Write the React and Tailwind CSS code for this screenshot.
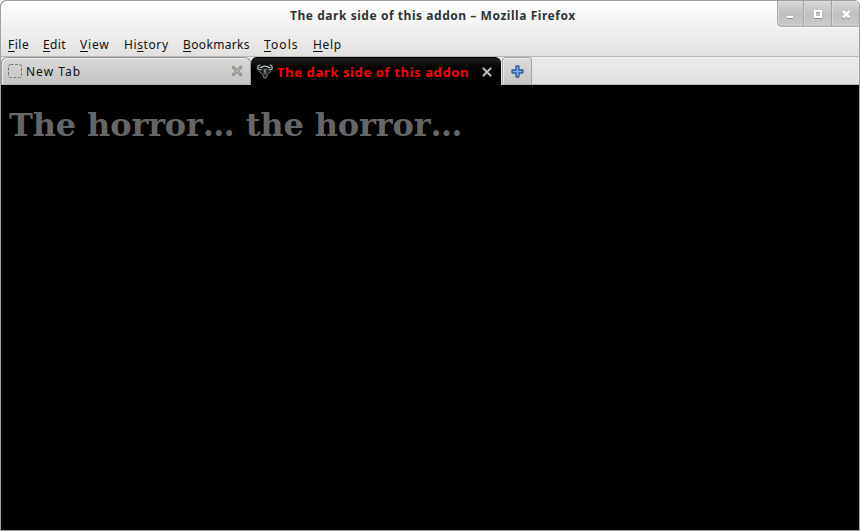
const menus = [
  { key: 'F', pre: '', post: 'ile', cls: 'w-[35px] tracking-[0.5px]' },
  { key: 'E', pre: '', post: 'dit', cls: 'w-[37px] tracking-[0.4px]' },
  { key: 'V', pre: '', post: 'iew', cls: 'w-[44px] tracking-[0.8px]' },
  { key: 's', pre: 'Hi', post: 'tory', cls: 'w-[59px] tracking-[0.6px]' },
  { key: 'B', pre: '', post: 'ookmarks', cls: 'w-[81px] tracking-[0.35px]' },
  { key: 'T', pre: '', post: 'ools', cls: 'w-[49px] tracking-[1.1px]' },
  { key: 'H', pre: '', post: 'elp', cls: 'w-[40px] tracking-[0.7px]' },
];

function WindowButtons() {
  return (
    <svg width="82" height="28" viewBox="0 0 82 28" className="shrink-0">
      <defs>
        <linearGradient id="wb" x1="0" y1="0" x2="0" y2="1">
          <stop offset="0" stopColor="#dadada" />
          <stop offset=".5" stopColor="#c0c0c0" />
          <stop offset="1" stopColor="#cbcbcb" />
        </linearGradient>
      </defs>
      <path d="M.5 0V23Q.5 27 4.500 27H82V0Z" fill="#fafafa" />
      <path d="M.5 0V22Q.5 25.500 4.500 25.500H82V0Z" fill="url(#wb)" />
      <path d="M.5 0V21.500Q.5 25.500 4.500 25.500H82" fill="none" stroke="#a9a9a9" />
      <path d="M26.500 0V25M54.500 0V25" stroke="#a6a6a6" />
      <path d="M27.500 0V25M55.500 0V25M1.500 0V22" stroke="#d8d8d8" />
      <path d="M10 17.500h6M37 17.500h8M65 17.500h2.500M70.500 17.500h2.500" stroke="#8f8f8f" />
      <path d="M10 16h6" stroke="#fff" strokeWidth="2" />
      <rect x="38" y="10" width="6" height="6" fill="none" stroke="#fff" strokeWidth="2" />
      <path d="M39 11.500h4" stroke="#999" />
      <path d="M66 10l6.500 6.500M72.500 10l-6.500 6.500" stroke="#fff" strokeWidth="2.200" />
    </svg>
  );
}

function TabClose({ dark }) {
  return (
    <svg width="12" height="12" viewBox="0 0 12 12" className="shrink-0">
      <path d="M1.500 1.500l9 9M10.500 1.500l-9 9" stroke={dark ? '#555' : '#858580'} strokeWidth={dark ? 2.600 : 3} />
      <path d="M2.300 2.300l7.400 7.400M9.700 2.300l-7.400 7.400" stroke={dark ? '#cfcfcb' : '#bdbdb9'} strokeWidth={dark ? 1.400 : 1.100} />
    </svg>
  );
}

function SkullIcon() {
  return (
    <svg width="16" height="16" viewBox="0 0 16 16" className="shrink-0">
      <path d="M4.500 5.500C1.500 6.200.2 5 1 2.700 1.500 1.300 2.500 1 3.500 1.200M11.500 5.500c3 .7 4.300-.5 3.500-2.800C14.500 1.300 13.500 1 12.500 1.200" fill="none" stroke="#a8adad" strokeWidth="1.400" />
      <path d="M2.500 3.500C4 4.500 5 2.200 8 2.200s4 2.300 5.500 1.300" fill="none" stroke="#c0c4c4" strokeWidth="1.300" />
      <path d="M3.500 6l1.500-2h6l1.500 2-.4 2.500-1.600 3-1 2.500L8 15.500 6.500 14l-1-2.500-1.600-3z" fill="#303434" />
      <path d="M4.500 7l2 .7-.3 1.500-1.500-.7zM11.500 7l-2 .7.3 1.500 1.500-.7zM7 11h2l-1 1.500z" fill="#080808" />
      <path d="M7 10l1-5 1 5M5.500 10.500l1.500 3 1 1 1-1 1.500-3M1.500 7.500l2 .5 1 2M14.500 7.500l-2 .5-1 2" stroke="#8f9494" strokeWidth=".8" fill="none" />
    </svg>
  );
}

export default function App() {
  return (
    <div className="flex h-[531px] w-[860px] bg-white">
      <div className="flex w-[860px] flex-col overflow-hidden rounded-t-[6px] border border-[#a0a0a0] bg-black font-['Noto_Sans',sans-serif] text-[13px] text-[#101010]">
        <header className="flex h-[55px] shrink-0 flex-col bg-gradient-to-b from-white to-[#e2e1e0]">
          <div className="flex h-7 justify-end">
            <div className="flex-1 pl-[289px] text-[12px] leading-[29px] font-bold tracking-[0.55px] whitespace-nowrap text-[#2e3436]">
              <span>The dark side of this addon – Mozilla Firefox</span>
            </div>
            <WindowButtons />
          </div>
          <nav className="flex h-[27px] pl-[7px] text-[12px] leading-[32px]">
            {menus.map((m) => (
              <span key={m.post} className={'whitespace-nowrap ' + m.cls}>
                {m.pre}
                <span className="underline decoration-1 underline-offset-[2px]">{m.key}</span>
                {m.post}
              </span>
            ))}
          </nav>
        </header>
        <div className="flex h-[29px] shrink-0 border-t border-[#b9b8b7] bg-gradient-to-b from-[#ecebea] to-[#e1e0df]">
          <div className="flex h-[28px] w-[250px] items-center rounded-t-[6px] border border-[#999] border-b-[#b5b4b3] bg-gradient-to-b from-[#dad9d8] to-[#c5c4c3] pr-[7px] pl-[5px] shadow-[inset_1px_1px_0_#ececeb]">
            <svg width="16" height="16" viewBox="0 0 16 16">
              <rect x="1.500" y="1.500" width="13" height="13" rx="2" fill="none" stroke="#777" strokeDasharray="3 1.500" />
            </svg>
            <span className="ml-[3px] flex-1 pt-[2px] text-[12px] leading-[24px] tracking-[1px]">New Tab</span>
            <TabClose />
          </div>
          <div className="flex h-7 w-[250px] items-center rounded-t-[6px] border-t border-black bg-gradient-to-b from-[#202020] to-black to-70% pr-2 pl-[6px]">
            <SkullIcon />
            <span className="ml-[4px] flex-1 pt-[1px] text-[13px] leading-[26px] font-bold tracking-[0.62px] whitespace-nowrap text-[#f00]">The dark side of this addon</span>
            <TabClose dark />
          </div>
          <div className="ml-[1px] flex h-[28px] w-[30px] items-center justify-center rounded-t-[4px] border border-[#a5a5a5] border-b-[#b5b4b3] bg-gradient-to-b from-[#dddcdb] to-[#c7c6c5] pl-px shadow-[inset_1px_1px_0_#ececeb]">
            <svg width="13" height="13" viewBox="0 0 13 13">
              <path d="M5 1.500Q5 1 5.500 1h2q.5 0 .5.500V5h3.500q.5 0 .5.500v2q0 .500-.5.500H8v3.500q0 .500-.5.500h-2q-.5 0-.5-.5V8H1.500Q1 8 1 7.500v-2Q1 5 1.500 5H5z" fill="#82aedd" stroke="#2c5a9c" strokeWidth="1.300" />
            </svg>
          </div>
          <div className="h-[28px] flex-1 border-b border-[#b5b4b3]" />
        </div>
        <main className="flex-1 bg-black pt-[22px] pl-2">
          <h1 className="font-['DejaVu_Serif',serif] text-[32px] leading-[37px] font-bold tracking-[-0.13px] whitespace-nowrap text-[#666]">The horror… the horror…</h1>
        </main>
      </div>
    </div>
  );
}
